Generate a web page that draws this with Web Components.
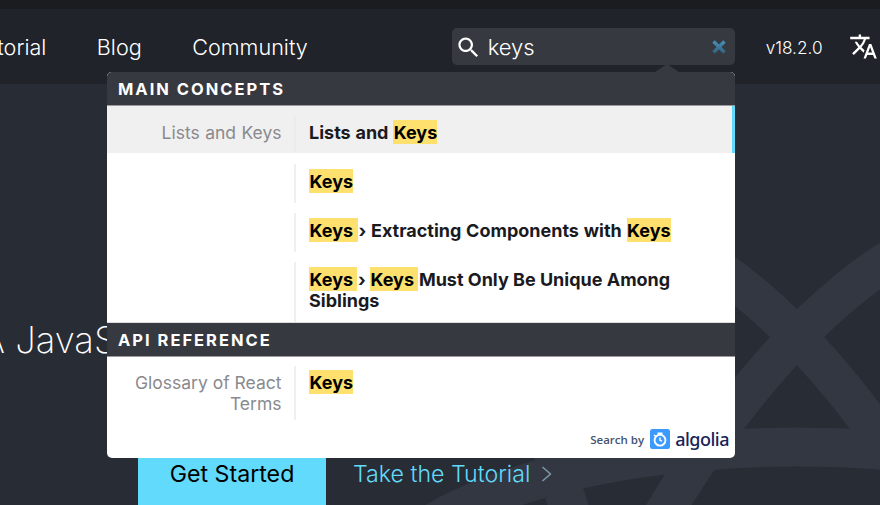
<!DOCTYPE html>
<html lang="en">
<head>
<meta charset="utf-8">
<title>React docs search</title>
<style>
  html, body { margin: 0; height: 505px; overflow: hidden; background: #282c34; }
  body { position: relative; font-family: Inter, "Liberation Sans", sans-serif; }
</style>
</head>
<body>
<site-header>
  <nav-link>Tutorial</nav-link>
  <nav-link>Blog</nav-link>
  <nav-link>Community</nav-link>
</site-header>
<hero-section></hero-section>
<search-panel>
  <result-section title="Main Concepts">
    <result-row label="Lists and Keys" selected loose>Lists and <hl-text>Keys</hl-text></result-row>
    <result-row><hl-text>Keys</hl-text></result-row>
    <result-row loose><hl-text>Keys</hl-text> › Extracting Components with <hl-text>Keys</hl-text></result-row>
    <result-row><hl-text>Keys</hl-text> › <hl-text>Keys</hl-text> Must Only Be Unique Among Siblings</result-row>
  </result-section>
  <result-section title="API Reference">
    <result-row label="Glossary of React Terms" tight><hl-text>Keys</hl-text></result-row>
  </result-section>
  <algolia-credit></algolia-credit>
</search-panel>

<script>
function define(name, html, props) {
  const template = document.createElement('template')
  template.innerHTML = html
  customElements.define(name, class extends HTMLElement {
    constructor() {
      super()
      this.attachShadow({ mode: 'open' }).appendChild(template.content.cloneNode(true))
      if (props) props(this)
    }
  })
}

define('nav-link', `
  <style>
  :host { display: block; font-size: 21.6px; font-weight: 300; color: #fff; white-space: nowrap; }
  </style>
  <slot></slot>
`)

define('site-header', `
  <style>
  :host { display: block; border-top: 9px solid #1a1c20; background: #20232a; height: 75px; }
  .bar { display: flex; align-items: center; height: 75px; box-sizing: border-box; padding: 0 2px 0 0; }
  nav { display: flex; gap: 50.5px; margin-left: -27.5px; }
  .search {
    margin-left: auto; margin-right: 31px; width: 283px; height: 37px; box-sizing: border-box;
    display: flex; align-items: center; background: #373940; border-radius: 5px; padding: 2px 8px 0 3px;
    position: relative; top: -.5px;
  }
  .search svg.find { width: 27px; height: 27px; fill: #fff; flex: none; }
  .query { margin-left: 6px; font-size: 22px; font-weight: 300; color: #fff; flex: 1; }
  .clear { width: 14px; height: 14px; stroke-width: 3.4; margin-right: 1px; }
  .version { font-size: 17.2px; font-weight: 300; color: #fff; margin-right: 26.5px; padding-top: 2px; }
  .lang { width: 29px; height: 29px; fill: #fff; flex: none; }
  </style>
  <div class="bar">
    <nav><slot></slot></nav>
    <div class="search">
      <svg class="find" viewBox="0 0 24 24"><path d="M15.5 14h-.79l-.28-.27C15.41 12.59 16 11.11 16 9.5 16 5.91 13.09 3 9.5 3S3 5.91 3 9.5 5.91 16 9.5 16c1.61 0 3.09-.59 4.23-1.57l.27.28v.79l5 4.99L20.49 19l-4.99-5zm-6 0C7.01 14 5 11.99 5 9.5S7.01 5 9.5 5 14 7.01 14 9.5 11.99 14 9.5 14z"/></svg>
      <span class="query">keys</span>
      <svg class="clear" viewBox="0 0 14 14">
        <defs><linearGradient id="x" gradientUnits="userSpaceOnUse" x1="0" y1="0" x2="0" y2="14"><stop offset="0" stop-color="#4a94bd"/><stop offset="1" stop-color="#2f5f7c"/></linearGradient></defs>
        <path stroke="url(#x)" d="M1.5 1.5l11 11M12.5 1.5l-11 11"/>
      </svg>
    </div>
    <span class="version">v18.2.0</span>
    <svg class="lang" viewBox="0 0 24 24"><path d="M12.87 15.07l-2.54-2.51.03-.03c1.74-1.94 2.98-4.17 3.71-6.53H17V4h-7V2H8v2H1v1.99h11.17C11.5 7.92 10.44 9.75 9 11.35 8.07 10.32 7.3 9.19 6.69 8h-2c.73 1.63 1.73 3.17 2.98 4.56l-5.09 5.02L4 19l5-5 3.11 3.11.76-2.04zM18.5 10h-2L12 22h2l1.12-3h4.75L21 22h2l-4.5-12zm-2.62 7l1.62-4.33L19.12 17h-3.24z"/></svg>
  </div>
`)

define('hero-section', `
  <style>
  :host { display: block; position: relative; height: 421px; overflow: hidden; background: #282c34; }
  .logo { position: absolute; left: 0; top: -84px; width: 880px; height: 505px; fill: none; stroke: #333741; stroke-width: 39; }
  .content { position: relative; padding-top: 232px; }
  h1 { margin: 0 0 79px -19px; font-size: 36.5px; line-height: 48px; font-weight: 200; color: #fff; white-space: nowrap; }
  .cta { display: flex; align-items: center; margin-left: 138px; }
  .primary {
    width: 188px; height: 62px; display: flex; align-items: center; justify-content: center;
    background: #61dafb; color: #000; font-size: 23.2px; font-weight: 400;
  }
  .secondary { margin-left: 27px; display: flex; align-items: center; color: #61dafb; font-size: 23.2px; font-weight: 300; }
  .secondary svg { margin-left: 11px; width: 11px; height: 16px; fill: none; stroke: #7d9cac; stroke-width: 1.4; }
  </style>
  <svg class="logo" viewBox="0 0 880 505">
    <g transform="translate(797 612)">
      <ellipse rx="432" ry="165"/>
      <ellipse rx="432" ry="165" transform="rotate(60)"/>
      <ellipse rx="432" ry="165" transform="rotate(120)"/>
    </g>
  </svg>
  <div class="content">
    <h1>A JavaScript library</h1>
    <div class="cta">
      <div class="primary">Get Started</div>
      <div class="secondary">Take the Tutorial<svg viewBox="0 0 11 16"><path d="M1.5 1l8 7-8 7"/></svg></div>
    </div>
  </div>
`)

define('search-panel', `
  <style>
  :host {
    display: block; position: absolute; left: 107px; top: 72px; width: 628px; height: 386px;
    background: #fff; border-radius: 5px; font-family: Inter, "Liberation Sans", sans-serif;
  }
  .caret {
    position: absolute; right: 56px; top: -8px; width: 0; height: 0;
    border-left: 12px solid transparent; border-right: 12px solid transparent; border-bottom: 8px solid #373940;
  }
  .body { border-radius: 5px; overflow: hidden; height: 100%; display: flex; flex-direction: column; }
  </style>
  <div class="caret"></div>
  <div class="body"><slot></slot></div>
`)

define('result-section', `
  <style>
  :host { display: block; }
  :host(:not(:first-child)) { margin-top: 1px; }
  h2 {
    margin: 0; height: 33px; line-height: 34px; padding-left: 11px; background: #373940; color: #fff;
    font-size: 16.5px; font-weight: 700; letter-spacing: 2px; text-transform: uppercase;
    box-shadow: 0 1px 0 #9a9a9e, 0 -1px 0 #ddd; position: relative;
  }
  </style>
  <h2></h2>
  <slot></slot>
`, el => {
  el.shadowRoot.querySelector('h2').textContent = el.getAttribute('title')
  el.removeAttribute('title')
})

define('result-row', `
  <style>
  :host { display: flex; padding-top: 10px; font-size: 18px; line-height: 21px; background: #fff; }
  :host([selected]) { background: #f0f0f0; height: 38px; margin-bottom: 1px; box-shadow: inset -3px 0 0 #61dafb; }
  :host([loose]) { word-spacing: .5px; }
  .label {
    flex: none; width: 187px; box-sizing: border-box; padding: 7px 12.5px 11px 20px; text-align: right;
    color: #8a8a8e; font-weight: 400; font-size: 17.5px;
  }
  .title {
    flex: 1; border-left: 2px solid #f0f0f0; padding: 7px 50px 11px 13px;
    font-weight: 700; color: #1a1a1f;
  }
  :host([selected]) .title { border-left-color: #ececec; }
  :host([tight]) .label, :host([tight]) .title { padding-top: 6px; padding-bottom: 6px; }
  </style>
  <div class="label"></div>
  <div class="title"><slot></slot></div>
`, el => {
  el.shadowRoot.querySelector('.label').textContent = el.getAttribute('label') || ''
})

define('hl-text', `
  <style>
  :host { display: inline; background: #fde06e; padding: 2px 0 1px .5px; margin-right: .6px; color: #000; }
  </style>
  <slot></slot>
`)

define('algolia-credit', `
  <style>
  :host {
    display: flex; flex: 1; align-items: center; justify-content: flex-end; padding: 0 6px 0 0;
    font-family: "Open Sans", "Noto Sans", sans-serif;
  }
  .by { font-size: 11.5px; font-weight: 600; color: #46536f; margin-right: 6px; }
  svg { width: 20px; height: 20px; margin-right: 5px; flex: none; }
  .name { font-family: "Noto Sans", sans-serif; font-size: 18px; letter-spacing: -.5px; font-weight: 500; color: #182359; line-height: 20px; }
  </style>
  <span class="by">Search by</span>
  <svg viewBox="0 0 20 20">
    <rect width="20" height="20" rx="2.5" fill="#3a9aff"/>
    <circle cx="10" cy="11.2" r="5.4" fill="none" stroke="#fff" stroke-width="1.9"/>
    <path d="M10 8.4v2.8l2 1" fill="none" stroke="#fff" stroke-width="1.4"/>
    <path d="M8 4.2h4M4.4 6.2l1.3 1.2" fill="none" stroke="#fff" stroke-width="1.5" stroke-linecap="round"/>
  </svg>
  <span class="name">algolia</span>
`)
</script>
</body>
</html>
